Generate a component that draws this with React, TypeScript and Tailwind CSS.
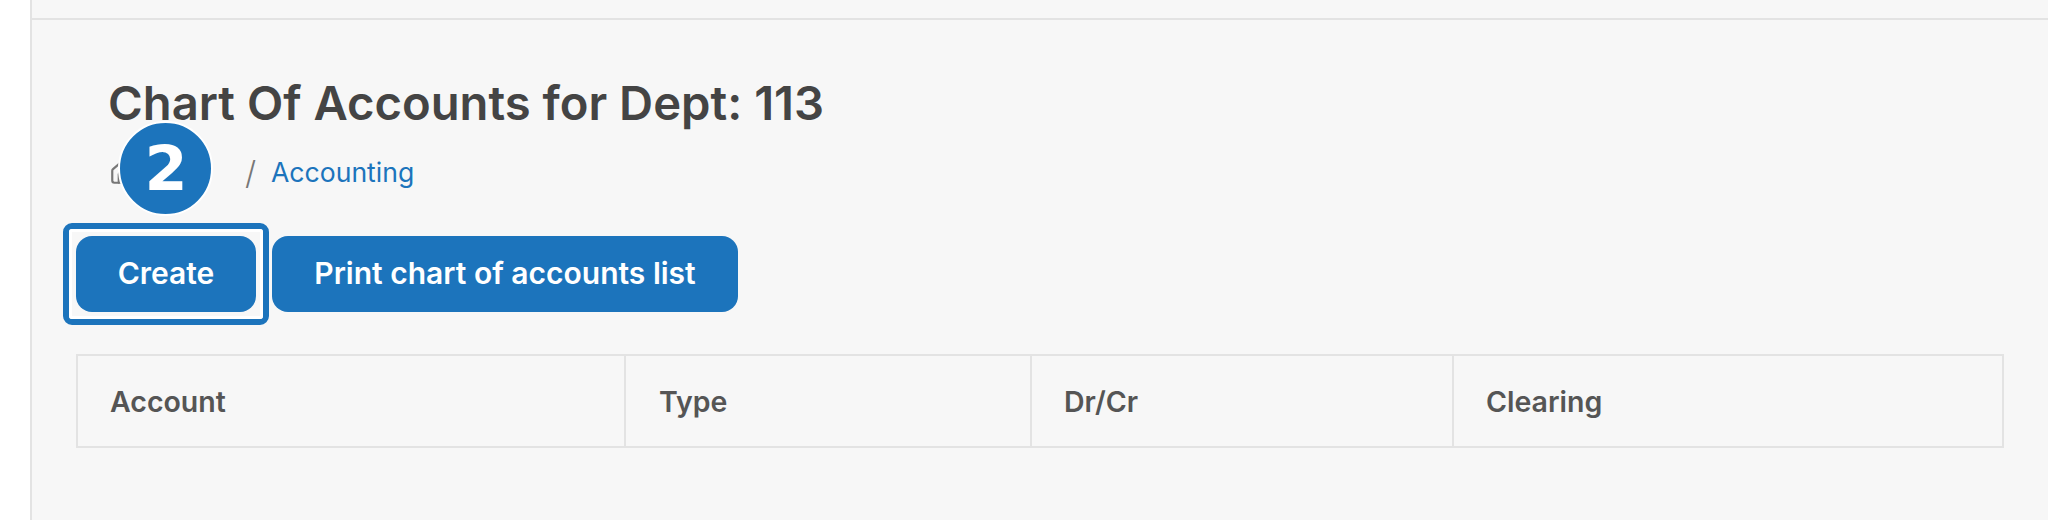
import { Home } from "lucide-react";

export default function App() {
  return (
    <div className="h-[520px] w-[2048px] flex bg-white overflow-hidden font-['Inter','Liberation_Sans',sans-serif]">
      <div className="w-[30px] shrink-0 bg-white" />
      <main className="relative flex-1 border-l-2 border-[#e3e3e3] bg-[#f7f7f7] flex flex-col">
        <div className="h-[20px] shrink-0 border-b-2 border-[#e3e3e3]" />
        <div className="pl-[44px] pr-[44px] flex flex-col">
          <h1 className="mt-[53px] ml-[32px] text-[47.2px] leading-[60px] font-semibold text-[#444444]">Chart Of Accounts for Dept: 113</h1>
          <nav className="mt-[20px] ml-[33px] h-[40px] flex items-center text-[26.6px] text-[#666]">
            <Home className="w-[26px] h-[26px] text-[#777] shrink-0" strokeWidth={2} />
            <span className="ml-[110px] w-[26px] text-[32px] font-light text-[#777]">/</span>
            <a className="text-[#1c74bc]">Accounting</a>
          </nav>
          <div className="mt-[43px] flex gap-[16px]">
            <div className="relative">
              <button className="h-[76px] w-[180px] rounded-[16px] bg-[#1c74bc] pb-[2px] text-white text-[30px] font-semibold">Create</button>
              <div className="absolute left-[-13px] top-[-13px] h-[102px] w-[206px] rounded-[9px] border-[6px] border-[#1c74bc]">
                <div className="h-full w-full rounded-[3px] border-[3px] border-white" />
              </div>
              <div className="absolute left-[42px] top-[-115px] h-[95px] w-[95px] rounded-full bg-[#1c74bc] border-2 border-white flex items-center justify-center pl-[1px] text-white text-[62px] font-bold font-['DejaVu_Sans',sans-serif]">2</div>
            </div>
            <button className="h-[76px] w-[466px] rounded-[16px] bg-[#1c74bc] pb-[2px] text-white text-[30px] font-semibold">Print chart of accounts list</button>
          </div>
          <table className="mt-[42px] w-full table-fixed border-collapse text-[28.5px] text-[#555]">
            <thead>
              <tr className="h-[92px]">
                <th className="w-[548px] border-2 border-[#e3e3e3] pl-[32px] pt-[2px] text-left font-semibold">Account</th>
                <th className="w-[406px] border-2 border-[#e3e3e3] pl-[33px] pt-[2px] text-left font-semibold">Type</th>
                <th className="w-[422px] border-2 border-[#e3e3e3] pl-[32px] pt-[2px] text-left font-semibold">Dr/Cr</th>
                <th className="border-2 border-[#e3e3e3] pl-[32px] pt-[2px] text-left font-semibold">Clearing</th>
              </tr>
            </thead>
          </table>
        </div>
      </main>
    </div>
  );
}
